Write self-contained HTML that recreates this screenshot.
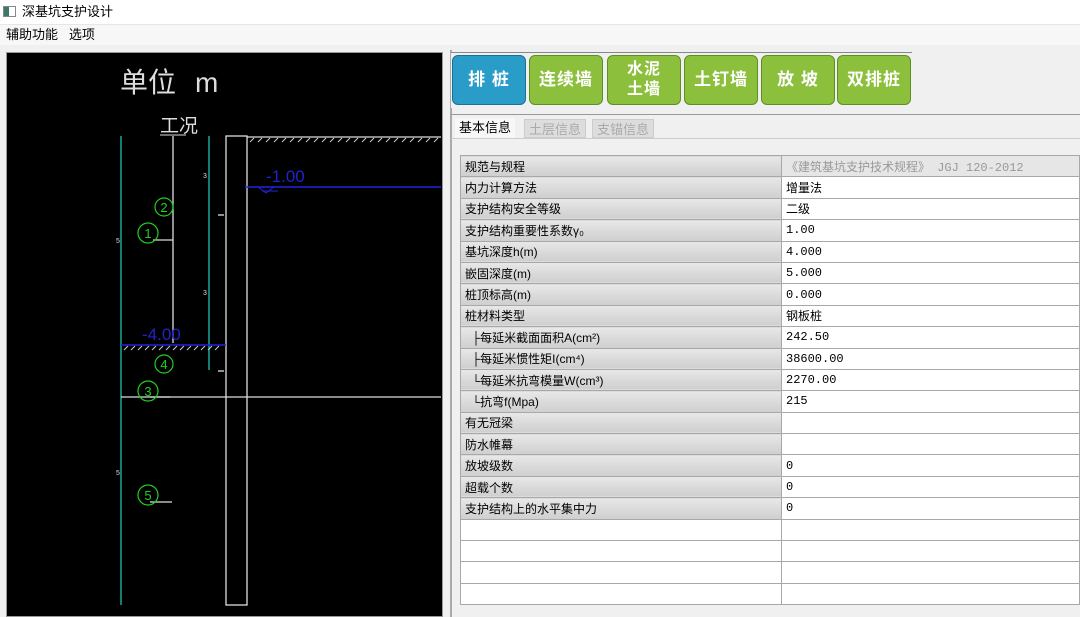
<!DOCTYPE html>
<html><head><meta charset="utf-8"><style>
*{margin:0;padding:0;box-sizing:border-box}
body{width:1080px;height:617px;overflow:hidden;background:#f0f0f0;font-family:"Liberation Sans","Noto Sans CJK SC",sans-serif;position:relative;color:#000}
.abs{position:absolute}
.title{left:0;top:0;width:1080px;height:25px;background:#fff;font-size:13px;line-height:24px;padding-left:22px;border-bottom:1px solid #e6e6e6}
.menu{left:0;top:25px;width:1080px;height:20px;background:#f7f7f7;font-size:13px;line-height:20px;padding-left:6px}
.btn{position:absolute;top:55px;height:50px;width:74px;border-radius:6px;background:#8cc03c;border:1px solid #5e8f22;color:#fff;font-weight:bold;font-size:17px;text-align:center;display:flex;align-items:center;justify-content:center;line-height:20px;letter-spacing:1px}
.tbl{position:absolute;left:460px;top:155px;width:620px;border-collapse:collapse;font-size:12px}
.tbl td{height:21.4px;border:1px solid #a8a8a8;padding:0 4px;white-space:nowrap}
.tbl td.l{width:321px;background:linear-gradient(#e8e8e8,#d8d8d8 60%,#cfcfcf)}
.tbl td.v{background:#fff;font-family:"Liberation Mono","Noto Sans CJK SC",monospace}
</style></head><body>
<div class="abs title"><span style="position:absolute;left:3px;top:6px;width:13px;height:11px;border:1px solid #888;background:linear-gradient(90deg,#3a7a6a 45%,#fff 45%)"></span>深基坑支护设计</div>
<div class="abs menu">辅助功能&nbsp;&nbsp;&nbsp;选项</div>
<div class="abs" style="left:6px;top:52px;width:437px;height:565px;border:1px solid #999;background:#000"></div>
<svg class="abs" style="left:0;top:0" width="445" height="617" font-family="Liberation Sans,Noto Sans CJK SC,sans-serif">
<text x="120" y="92" fill="#ddd" font-size="28">单位</text><text x="195" y="92" fill="#ddd" font-size="28">m</text>
<text x="160" y="132" fill="#ddd" font-size="19">工况</text>
<line x1="160" y1="135" x2="186" y2="135" stroke="#ddd"/>
<g stroke="#19a79b" stroke-width="1.5"><line x1="121" y1="136" x2="121" y2="605"/><line x1="209" y1="136" x2="209" y2="370"/></g>
<g stroke="#ddd" stroke-width="1.3" fill="none">
<line x1="173" y1="136" x2="173" y2="343"/>
<rect x="226" y="136" width="21" height="469"/>
<line x1="247" y1="137" x2="441" y2="137"/>
<line x1="121" y1="397" x2="441" y2="397"/>
<line x1="153" y1="240" x2="173" y2="240"/>
<line x1="218" y1="215" x2="224" y2="215"/><line x1="218" y1="371" x2="224" y2="371"/>
<line x1="150" y1="397" x2="170" y2="397"/><line x1="150" y1="502" x2="172" y2="502"/>
</g>
<path d="M250 142l4-4M258 142l4-4M266 142l4-4M274 142l4-4M282 142l4-4M290 142l4-4M298 142l4-4M306 142l4-4M314 142l4-4M322 142l4-4M330 142l4-4M338 142l4-4M346 142l4-4M354 142l4-4M362 142l4-4M370 142l4-4M378 142l4-4M386 142l4-4M394 142l4-4M402 142l4-4M410 142l4-4M418 142l4-4M426 142l4-4M434 142l4-4" stroke="#ccc"/>
<path d="M124 350l4-4M131 350l4-4M138 350l4-4M145 350l4-4M152 350l4-4M159 350l4-4M166 350l4-4M173 350l4-4M180 350l4-4M187 350l4-4M194 350l4-4M201 350l4-4M208 350l4-4M215 350l4-4" stroke="#ccc"/>
<line x1="121" y1="345" x2="226" y2="345" stroke="#2222dd" stroke-width="1.5"/>
<line x1="245" y1="187" x2="441" y2="187" stroke="#2222dd" stroke-width="1.5"/>
<path d="M258 187l8 6 8-6M262 191h16" stroke="#2222dd" fill="none"/>
<text x="266" y="182" fill="#2222cc" font-size="17">-1.00</text>
<text x="142" y="340" fill="#2222cc" font-size="17">-4.00</text>
<g fill="none" stroke="#1fd01f" stroke-width="1.2" font-size="12">
<circle cx="164" cy="207" r="9"/><circle cx="148" cy="233" r="10"/><circle cx="164" cy="364" r="9"/><circle cx="148" cy="391" r="10"/><circle cx="148" cy="495" r="10"/></g>
<g fill="#1fd01f" font-size="13" text-anchor="middle"><text x="164" y="212">2</text><text x="148" y="238">1</text><text x="164" y="369">4</text><text x="148" y="396">3</text><text x="148" y="500">5</text></g>
<g fill="#ddd" font-size="7"><text x="116" y="243">5</text><text x="203" y="178">3</text><text x="203" y="295">3</text><text x="116" y="475">5</text></g>
</svg>
<div class="abs" style="left:450px;top:50px;width:2px;height:567px;background:#aaa"></div>
<div class="abs" style="left:451px;top:52px;width:461px;height:56px;border-top:1px solid #888;background:#f0f0f0"></div>
<div class="btn" style="left:452px;background:#2a9cc8;border-color:#1c6f95">排 桩</div>
<div class="btn" style="left:529px">连续墙</div>
<div class="btn" style="left:607px;font-size:16px">水泥<br>土墙</div>
<div class="btn" style="left:684px">土钉墙</div>
<div class="btn" style="left:761px">放 坡</div>
<div class="btn" style="left:837px">双排桩</div>
<div class="abs" style="left:451px;top:114px;width:629px;height:1px;background:#999"></div>
<div class="abs" style="left:455px;top:118px;font-size:13px;line-height:20px;height:21px;padding:0 4px;background:#f7f7f7">基本信息</div>
<div class="abs" style="left:524px;top:119px;font-size:13px;line-height:19px;height:19px;padding:0 4px;color:#aaa;background:#ddd;border:1px solid #ccc">土层信息</div>
<div class="abs" style="left:592px;top:119px;font-size:13px;line-height:19px;height:19px;padding:0 4px;color:#aaa;background:#ddd;border:1px solid #ccc">支锚信息</div>
<div class="abs" style="left:451px;top:138px;width:629px;height:1px;background:#ccc"></div>
<table class="tbl">
<tr><td class="l">规范与规程</td><td class="v" style="background:#e6e6e6;color:#999">《建筑基坑支护技术规程》 JGJ 120-2012</td></tr>
<tr><td class="l">内力计算方法</td><td class="v">增量法</td></tr>
<tr><td class="l">支护结构安全等级</td><td class="v">二级</td></tr>
<tr><td class="l">支护结构重要性系数γ₀</td><td class="v">1.00</td></tr>
<tr><td class="l">基坑深度h(m)</td><td class="v">4.000</td></tr>
<tr><td class="l">嵌固深度(m)</td><td class="v">5.000</td></tr>
<tr><td class="l">桩顶标高(m)</td><td class="v">0.000</td></tr>
<tr><td class="l">桩材料类型</td><td class="v">钢板桩</td></tr>
<tr><td class="l">&nbsp;&nbsp;├每延米截面面积A(cm²)</td><td class="v">242.50</td></tr>
<tr><td class="l">&nbsp;&nbsp;├每延米惯性矩I(cm⁴)</td><td class="v">38600.00</td></tr>
<tr><td class="l">&nbsp;&nbsp;└每延米抗弯模量W(cm³)</td><td class="v">2270.00</td></tr>
<tr><td class="l">&nbsp;&nbsp;└抗弯f(Mpa)</td><td class="v">215</td></tr>
<tr><td class="l">有无冠梁</td><td class="v"></td></tr>
<tr><td class="l">防水帷幕</td><td class="v"></td></tr>
<tr><td class="l">放坡级数</td><td class="v">0</td></tr>
<tr><td class="l">超载个数</td><td class="v">0</td></tr>
<tr><td class="l">支护结构上的水平集中力</td><td class="v">0</td></tr>
<tr><td class="v"></td><td class="v"></td></tr>
<tr><td class="v"></td><td class="v"></td></tr>
<tr><td class="v"></td><td class="v"></td></tr>
<tr><td class="v"></td><td class="v"></td></tr>
</table>
</body></html>
